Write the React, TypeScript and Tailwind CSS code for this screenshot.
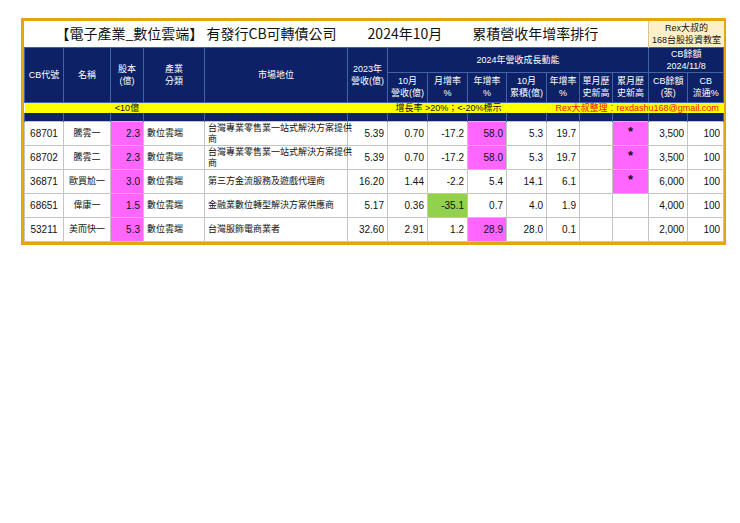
type Row = {
    code: string
    name: string
    cap: string
    market: string[]
    rev23: string
    oct: string
    mom: string
    momGreen?: boolean
    yoy: string
    yoyPink?: boolean
    cum: string
    cumYoy: string
    high: string
}

const rows: Row[] = [
    { code: "68701", name: "騰雲一", cap: "2.3", market: ["台灣專業零售業一站式解決方案提供", "商"], rev23: "5.39", oct: "0.70", mom: "-17.2", yoy: "58.0", yoyPink: true, cum: "5.3", cumYoy: "19.7", high: "*" },
    { code: "68702", name: "騰雲二", cap: "2.3", market: ["台灣專業零售業一站式解決方案提供", "商"], rev23: "5.39", oct: "0.70", mom: "-17.2", yoy: "58.0", yoyPink: true, cum: "5.3", cumYoy: "19.7", high: "*" },
    { code: "36871", name: "歐買尬一", cap: "3.0", market: ["第三方金流服務及遊戲代理商"], rev23: "16.20", oct: "1.44", mom: "-2.2", yoy: "5.4", cum: "14.1", cumYoy: "6.1", high: "*" },
    { code: "68651", name: "偉康一", cap: "1.5", market: ["金融業數位轉型解決方案供應商"], rev23: "5.17", oct: "0.36", mom: "-35.1", momGreen: true, yoy: "0.7", cum: "4.0", cumYoy: "1.9", high: "" },
    { code: "53211", name: "美而快一", cap: "5.3", market: ["台灣服飾電商業者"], rev23: "32.60", oct: "2.91", mom: "1.2", yoy: "28.9", yoyPink: true, cum: "28.0", cumYoy: "0.1", high: "" },
]

const cbAmount = ["3,500", "3,500", "6,000", "4,000", "2,000"]

const widths = [39, 47, 33, 61, 143, 40, 40, 40, 39, 40, 33, 33, 36, 39, 36]

// header cell, navy with light blue grid
const th = "border border-[#4163a6] bg-[#0c2166] text-white font-normal text-center align-middle leading-[12px] px-0"
// data cell
const td = "border border-[#c4c4c4] align-middle text-[#111] px-[3px] leading-[11px]"
const num = `${td} text-right text-[10px]`

const App = () => {
    return (
        <main className="w-[740px] h-[523px] bg-white pt-[18px] pl-[21px] font-['Liberation_Sans','Noto_Sans_CJK_TC',sans-serif]">
            <div className="w-[705px] border-[3px] border-[#e2a70e]">
                <table className="table-fixed border-collapse w-[699px] text-[9px]">
                    <colgroup>
                        {widths.map((w, i) => (
                            <col key={i} style={{ width: w }} />
                        ))}
                    </colgroup>
                    <tbody>
                        <tr className="h-[26px]">
                            <td colSpan={13} className="p-0 bg-white">
                                <div className="flex items-center pl-[31px] text-[14px] text-[#111] whitespace-nowrap font-['Noto_Sans_CJK_TC','Liberation_Sans',sans-serif]">
                                    <span>【電子產業_數位雲端】 有發行CB可轉債公司</span>
                                    <span className="ml-[31px]">2024年10月</span>
                                    <span className="ml-[30px]">累積營收年增率排行</span>
                                </div>
                            </td>
                            <td colSpan={2} className="p-0 bg-[#fdf0c9] border-l border-[#d8c48c] text-center text-[9px] leading-[12px] text-[#111]">
                                Rex大叔的<br />168台股投資教室
                            </td>
                        </tr>
                        <tr className="h-[23px]">
                            <th rowSpan={2} className={th}>CB代號</th>
                            <th rowSpan={2} className={th}>名稱</th>
                            <th rowSpan={2} className={th}>股本<br />(億)</th>
                            <th rowSpan={2} className={th}>產業<br />分類</th>
                            <th rowSpan={2} className={th}>市場地位</th>
                            <th rowSpan={2} className={th}>2023年<br />營收(億)</th>
                            <th colSpan={7} className={th}>2024年營收成長動能</th>
                            <th colSpan={2} className={th}>CB餘額<br />2024/11/8</th>
                        </tr>
                        <tr className="h-[30px]">
                            <th className={th}>10月<br />營收(億)</th>
                            <th className={th}>月增率<br />%</th>
                            <th className={th}>年增率<br />%</th>
                            <th className={th}>10月<br />累積(億)</th>
                            <th className={th}>年增率<br />%</th>
                            <th className={th}>單月歷<br />史新高</th>
                            <th className={th}>累月歷<br />史新高</th>
                            <th className={th}>CB餘額<br />(張)</th>
                            <th className={th}>CB<br />流通%</th>
                        </tr>
                        <tr className="h-[10px] bg-[#ffff00] text-[9px] leading-[10px]">
                            <td colSpan={2} className="p-0" />
                            <td className="p-0 text-center text-[#111] whitespace-nowrap">&lt;10億</td>
                            <td colSpan={3} className="p-0" />
                            <td colSpan={4} className="p-0 pl-[8px] text-[#111] whitespace-nowrap">增長率 &gt;20%；&lt;-20%標示</td>
                            <td colSpan={5} className="p-0 pr-[5px] text-right text-[#f01010] whitespace-nowrap">Rex大叔整理：rexdashu168@gmail.com</td>
                        </tr>
                        <tr className="h-[9px]">
                            {widths.map((_, i) => (
                                <td key={i} className="p-0 bg-[#0c2166] border-x border-[#4163a6]" />
                            ))}
                        </tr>
                        {rows.map((r, i) => (
                            <tr key={r.code} className="h-[24px]">
                                <td className={`${td} text-center text-[10px]`}>{r.code}</td>
                                <td className={`${td} text-center`}>{r.name}</td>
                                <td className={`${num} bg-[#ff66ff]`}>{r.cap}</td>
                                <td className={td}>數位雲端</td>
                                <td className={`${td} whitespace-nowrap`}>
                                    {r.market.map((line, j) => (
                                        <div key={j}>{line}</div>
                                    ))}
                                </td>
                                <td className={num}>{r.rev23}</td>
                                <td className={num}>{r.oct}</td>
                                <td className={`${num} ${r.momGreen ? "bg-[#92d050]" : ""}`}>{r.mom}</td>
                                <td className={`${num} ${r.yoyPink ? "bg-[#ff66ff]" : ""}`}>{r.yoy}</td>
                                <td className={num}>{r.cum}</td>
                                <td className={num}>{r.cumYoy}</td>
                                <td className={td} />
                                <td className={`${td} text-center text-[13px] font-bold ${r.high ? "bg-[#ff66ff]" : ""}`}>
                                    <span className="relative -top-[2px]">{r.high}</span>
                                </td>
                                <td className={num}>{cbAmount[i]}</td>
                                <td className={num}>100</td>
                            </tr>
                        ))}
                    </tbody>
                </table>
            </div>
        </main>
    )
}

export default App
